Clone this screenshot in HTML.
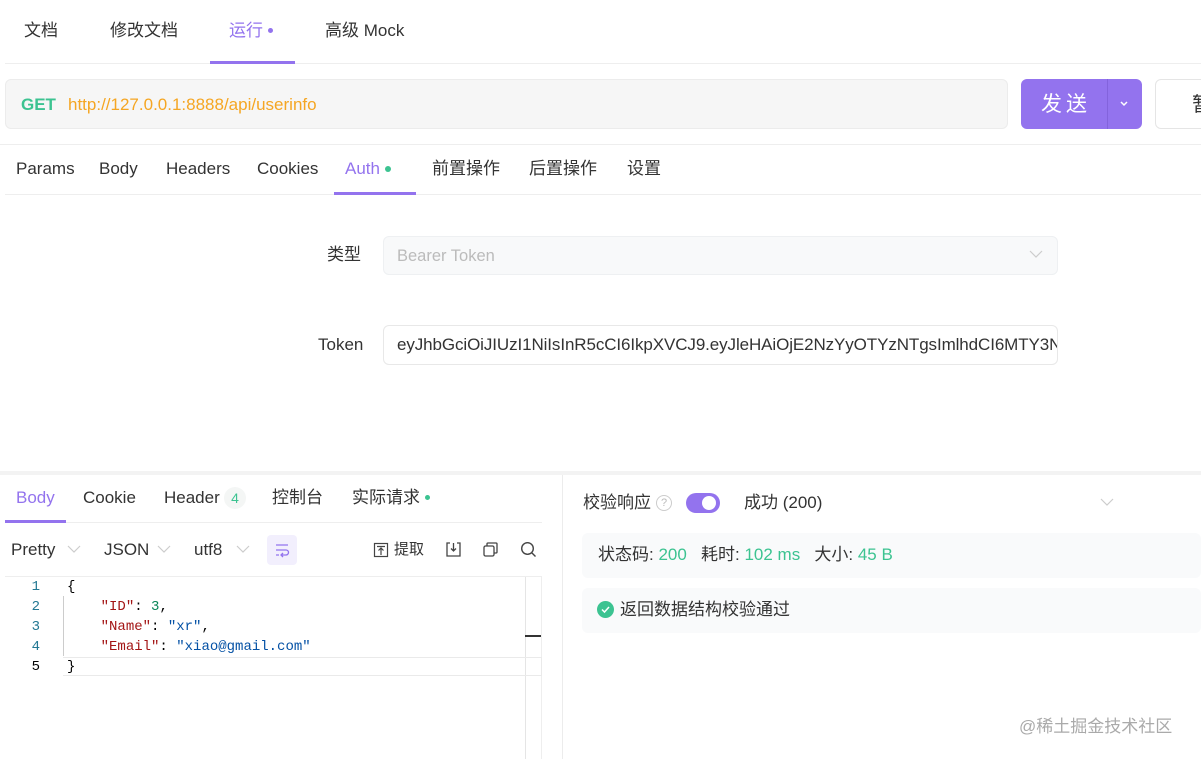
<!DOCTYPE html>
<html><head><meta charset="utf-8"><style>
*{margin:0;padding:0;box-sizing:border-box}
body{width:1201px;height:759px;overflow:hidden;background:#fff;font-family:"Liberation Sans","Noto Sans CJK SC",sans-serif;color:#333;position:relative;font-size:17px}
.a{position:absolute;white-space:nowrap;line-height:22px}
.line{position:absolute;background:#eeeeee}
.p{color:#9373ee}
.g{color:#3cc391}
.dot{display:inline-block;width:6px;height:6px;border-radius:50%;vertical-align:middle;margin-left:5px;position:relative;top:-1px}
.mono{font-family:"Liberation Mono",monospace;font-size:14px}
</style></head><body>
<!-- top tabs -->
<div class="a" style="left:24px;top:20px">文档</div>
<div class="a" style="left:110px;top:20px">修改文档</div>
<div class="a p" style="left:229px;top:20px">运行<span class="dot" style="background:#9373ee;width:5px;height:5px"></span></div>
<div class="a" style="left:325px;top:20px">高级 Mock</div>
<div class="line" style="left:5px;top:63px;width:1196px;height:1px"></div>
<div class="a" style="left:210px;top:61px;width:85px;height:3px;background:#9373ee"></div>
<!-- url -->
<div class="a" style="left:5px;top:79px;width:1003px;height:50px;background:#f6f6f6;border:1px solid #ececec;border-radius:6px"></div>
<div class="a" style="left:21px;top:94px;color:#3cc391;font-weight:bold;font-size:17px">GET</div>
<div class="a" style="left:68px;top:94px;color:#f5a623;font-size:17px">http://127.0.0.1:8888/api/userinfo</div>
<div class="a" style="left:1021px;top:79px;width:121px;height:50px;background:#9373ee;border-radius:6px"></div>
<div class="a" style="left:1107px;top:79px;width:1px;height:50px;background:#8363dc"></div>
<div class="a" style="left:1041px;top:92px;color:#fff;font-size:21px;letter-spacing:4px;line-height:26px">发送</div>
<svg class="a" style="left:1119px;top:100px" width="10" height="8"><path d="M2 2l3 3 3-3" stroke="#fff" stroke-width="1.5" fill="none"/></svg>
<div class="a" style="left:1155px;top:79px;width:60px;height:50px;border:1px solid #e5e5e5;border-radius:6px"></div>
<div class="a" style="left:1192px;top:92px;font-size:20px;line-height:26px">暂</div>
<div class="line" style="left:0;top:144px;width:1201px;height:1px"></div>
<!-- request tabs -->
<div class="a" style="left:16px;top:158px">Params</div>
<div class="a" style="left:99px;top:158px">Body</div>
<div class="a" style="left:166px;top:158px">Headers</div>
<div class="a" style="left:257px;top:158px">Cookies</div>
<div class="a p" style="left:345px;top:158px">Auth<span class="dot" style="background:#3cc391"></span></div>
<div class="a" style="left:432px;top:158px">前置操作</div>
<div class="a" style="left:529px;top:158px">后置操作</div>
<div class="a" style="left:627px;top:158px">设置</div>
<div class="line" style="left:5px;top:194px;width:1196px;height:1px"></div>
<div class="a" style="left:334px;top:192px;width:82px;height:3px;background:#9373ee"></div>
<!-- auth form -->
<div class="a" style="left:327px;top:244px">类型</div>
<div class="a" style="left:383px;top:236px;width:675px;height:39px;background:#f8f9fa;border:1px solid #eef0f2;border-radius:6px"></div>
<div class="a" style="left:397px;top:245px;color:#bbb;font-size:16.5px">Bearer Token</div>
<svg class="a" style="left:1029px;top:249px" width="14" height="10"><path d="M1 2l6 6 6-6" stroke="#ccc" stroke-width="1.2" fill="none"/></svg>
<div class="a" style="left:318px;top:334px">Token</div>
<div class="a" style="left:383px;top:325px;width:675px;height:40px;background:#fff;border:1px solid #e8e8e8;border-radius:6px;overflow:hidden"><div style="padding:8px 13px;font-size:17px;letter-spacing:-0.1px;line-height:22px">eyJhbGciOiJIUzI1NiIsInR5cCI6IkpXVCJ9.eyJleHAiOjE2NzYyOTYzNTgsImlhdCI6MTY3N</div></div>
<!-- divider band -->
<div class="a" style="left:0;top:471px;width:1201px;height:4px;background:#f3f3f3"></div>
<div class="a" style="left:562px;top:475px;width:1px;height:284px;background:#ececec"></div>
<!-- bottom left tabs -->
<div class="a p" style="left:16px;top:487px">Body</div>
<div class="a" style="left:83px;top:487px">Cookie</div>
<div class="a" style="left:164px;top:487px">Header</div>
<div class="a g" style="left:224px;top:487px;width:22px;height:22px;border-radius:11px;background:#f4f6f5;font-size:14px;text-align:center;line-height:22px">4</div>
<div class="a" style="left:272px;top:487px">控制台</div>
<div class="a" style="left:352px;top:487px">实际请求<span class="dot" style="background:#3cc391;width:5px;height:5px"></span></div>
<div class="line" style="left:5px;top:522px;width:537px;height:1px"></div>
<div class="a" style="left:5px;top:520px;width:61px;height:3px;background:#9373ee"></div>
<!-- toolbar -->
<div class="a" style="left:11px;top:539px">Pretty</div>
<svg class="a" style="left:67px;top:545px" width="14" height="9"><path d="M1 1l6 6 6-6" stroke="#ccc" stroke-width="1.2" fill="none"/></svg>
<div class="a" style="left:104px;top:539px">JSON</div>
<svg class="a" style="left:157px;top:545px" width="14" height="9"><path d="M1 1l6 6 6-6" stroke="#ccc" stroke-width="1.2" fill="none"/></svg>
<div class="a" style="left:194px;top:539px">utf8</div>
<svg class="a" style="left:236px;top:545px" width="14" height="9"><path d="M1 1l6 6 6-6" stroke="#ccc" stroke-width="1.2" fill="none"/></svg>
<div class="a" style="left:267px;top:535px;width:30px;height:30px;background:#f2effd;border-radius:4px"></div>
<svg class="a" style="left:274px;top:542px" width="16" height="16"><path d="M2 3h12M2 8h10a2.5 2.5 0 010 5H8M2 13h3M9 11l-2 2 2 2" stroke="#9373ee" stroke-width="1.3" fill="none"/></svg>
<svg class="a" style="left:373px;top:542px" width="16" height="16"><rect x="1.5" y="1.5" width="13" height="13" stroke="#444" fill="none" stroke-width="1.2"/><path d="M4 4.5h8M8 6v7M5.5 8.5L8 6l2.5 2.5" stroke="#444" fill="none" stroke-width="1.2"/></svg>
<div class="a" style="left:394px;top:539px;font-size:15px">提取</div>
<svg class="a" style="left:445px;top:541px" width="17" height="17"><path d="M5 2H2v13h13V2h-3M8.5 2v8M6 7.5l2.5 2.5 2.5-2.5" stroke="#444" fill="none" stroke-width="1.3"/></svg>
<svg class="a" style="left:482px;top:541px" width="17" height="17"><rect x="2" y="5" width="10" height="10" rx="1.5" stroke="#444" fill="none" stroke-width="1.3"/><path d="M5 5V3a1 1 0 011-1h8a1 1 0 011 1v8a1 1 0 01-1 1h-2" stroke="#444" fill="none" stroke-width="1.3"/></svg>
<svg class="a" style="left:520px;top:541px" width="17" height="17"><circle cx="7.5" cy="7.5" r="5.8" stroke="#444" fill="none" stroke-width="1.4"/><path d="M12 12l3.5 3.5" stroke="#444" stroke-width="1.4"/></svg>
<!-- code -->
<div class="line" style="left:5px;top:576px;width:537px;height:1px"></div>
<div class="a" style="left:525px;top:577px;width:1px;height:182px;background:#e5e5e5"></div>
<div class="a" style="left:541px;top:577px;width:1px;height:182px;background:#eee"></div>
<div class="a" style="left:525px;top:635px;width:16px;height:2px;background:#333"></div>
<div class="a" style="left:63px;top:657px;width:479px;height:19px;border:1px solid #eaeaea;border-left:none"></div>
<div class="a" style="left:63px;top:596px;width:1px;height:60px;background:#ccc"></div>
<div class="a mono" style="left:30px;top:577px;line-height:20px;color:#237893;text-align:right;width:10px">1<br>2<br>3<br>4<br><span style="color:#000">5</span></div>
<div class="a mono" style="left:67px;top:577px;line-height:20px;color:#000">{<br>&nbsp;&nbsp;&nbsp;&nbsp;<span style="color:#a31515">"ID"</span>: <span style="color:#098658">3</span>,<br>&nbsp;&nbsp;&nbsp;&nbsp;<span style="color:#a31515">"Name"</span>: <span style="color:#0451a5">"xr"</span>,<br>&nbsp;&nbsp;&nbsp;&nbsp;<span style="color:#a31515">"Email"</span>: <span style="color:#0451a5">"xiao@gmail.com"</span><br>}</div>
<!-- right panel -->
<div class="a" style="left:583px;top:492px">校验响应</div>
<div class="a" style="left:656px;top:495px;width:16px;height:16px;border:1px solid #ccc;border-radius:50%;color:#bbb;font-size:11px;text-align:center;line-height:14px">?</div>
<div class="a" style="left:686px;top:493px;width:34px;height:20px;background:#9373ee;border-radius:10px"></div>
<div class="a" style="left:702px;top:496px;width:14px;height:14px;background:#fff;border-radius:50%"></div>
<div class="a" style="left:744px;top:492px">成功 (200)</div>
<svg class="a" style="left:1100px;top:498px" width="14" height="9"><path d="M1 1l6 6 6-6" stroke="#ccc" stroke-width="1.2" fill="none"/></svg>
<div class="a" style="left:582px;top:533px;width:619px;height:45px;background:#f9fafb;border-radius:6px"></div>
<div class="a" style="left:598px;top:544px">状态码: <span class="g">200</span>&nbsp;&nbsp;&nbsp;耗时: <span class="g">102 ms</span>&nbsp;&nbsp;&nbsp;大小: <span class="g">45 B</span></div>
<div class="a" style="left:582px;top:588px;width:619px;height:45px;background:#f9fafb;border-radius:6px"></div>
<div class="a" style="left:597px;top:601px;width:17px;height:17px;background:#3cc391;border-radius:50%"></div>
<svg class="a" style="left:597px;top:601px" width="17" height="17"><path d="M5 8.5l2.5 2.5 4.5-5" stroke="#fff" stroke-width="1.5" fill="none"/></svg>
<div class="a" style="left:620px;top:599px">返回数据结构校验通过</div>
<div class="a" style="left:1019px;top:716px;color:#aaa;font-size:17px">@稀土掘金技术社区</div>
</body></html>
